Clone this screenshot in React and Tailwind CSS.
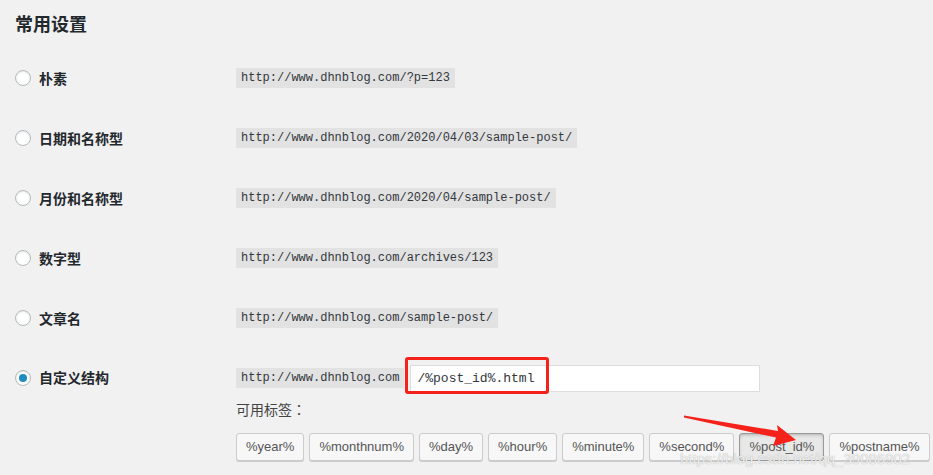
const rows = [
    { label: "朴素", url: "http://www.dhnblog.com/?p=123" },
    { label: "日期和名称型", url: "http://www.dhnblog.com/2020/04/03/sample-post/" },
    { label: "月份和名称型", url: "http://www.dhnblog.com/2020/04/sample-post/" },
    { label: "数字型", url: "http://www.dhnblog.com/archives/123" },
    { label: "文章名", url: "http://www.dhnblog.com/sample-post/" },
];

const tags = ["%year%", "%monthnum%", "%day%", "%hour%", "%minute%", "%second%", "%post_id%", "%postname%"];

const cjk = { fontFamily: '"Noto Sans", "Noto Sans CJK SC", sans-serif' };
const mono = { fontFamily: '"Liberation Mono", "DejaVu Sans Mono", monospace' };

function Radio({ checked }) {
    return (
        <span className="flex h-4 w-4 shrink-0 items-center justify-center rounded-full border border-[#b4b9be] bg-white shadow-[inset_0_1px_2px_rgba(0,0,0,0.1)]">
            {checked && <span className="h-2 w-2 rounded-full bg-[#1e8cbe]" />}
        </span>
    );
}

export default function App() {
    return (
        <div className="relative h-[475px] w-[933px] overflow-hidden bg-[#f1f1f1] pl-[15px] text-[#23282d]" style={cjk}>
            {/* 标题 */}
            <h2 className="h-12 pt-[11px] text-[18px] font-semibold leading-[26px] text-[#23282d]">常用设置</h2>

            {rows.map((r) => (
                <div key={r.label} className="flex h-[60px] items-center">
                    <div className="flex w-[221px] shrink-0 items-center gap-2">
                        <Radio />
                        <span className="text-[14px] font-semibold">{r.label}</span>
                    </div>
                    <code className="h-5 bg-[#e2e2e2] px-[5px] text-[12px] leading-5 text-[#32373c]" style={mono}>
                        {r.url}
                    </code>
                </div>
            ))}

            {/* 自定义结构 */}
            <div className="flex pt-4">
                <div className="flex h-[27px] w-[221px] shrink-0 items-center gap-2">
                    <Radio checked />
                    <span className="text-[14px] font-semibold">自定义结构</span>
                </div>
                <div>
                    <div className="flex items-center gap-[6px]">
                        <code className="h-5 bg-[#e2e2e2] px-[5px] text-[12px] leading-5 text-[#32373c]" style={mono}>
                            http://www.dhnblog.com
                        </code>
                        <div className="relative">
                            <input
                                readOnly
                                value="/%post_id%.html"
                                className="h-[27px] w-[350px] border border-[#dddddd] bg-white px-[6px] text-[13px] text-[#32373c] outline-none"
                                style={mono}
                            />
                            <div className="pointer-events-none absolute left-[-5px] top-[-7px] h-[37px] w-[144px] rounded-[3px] border-[3px] border-[#f5211b]" />
                        </div>
                    </div>
                    <p
                        className="mt-[7px] text-[14px] leading-5 text-[#444]"
                        style={{ fontFamily: '"Noto Sans CJK TC", "Noto Sans CJK SC", sans-serif' }}
                    >
                        可用标签：
                    </p>
                    <div className="mt-[14px] flex gap-[5px]" style={{ fontFamily: '"Liberation Sans", sans-serif' }}>
                        {tags.map((t) => (
                            <button
                                key={t}
                                className={`h-[28px] rounded-[3px] border px-[9px] text-[13px] leading-[26px] text-[#555] ${t === "%post_id%"
                                    ? "border-[#999] bg-[#e8e8e8] shadow-[inset_0_2px_5px_-3px_rgba(0,0,0,0.5)]"
                                    : "border-[#cccccc] bg-[#f7f7f7] shadow-[0_1px_0_#cccccc]"
                                    }`}
                            >
                                {t}
                            </button>
                        ))}
                    </div>
                </div>
            </div>

            {/* 红色箭头 */}
            <svg className="pointer-events-none absolute left-0 top-0" width="933" height="475">
                <polygon points="684,415.5 778,431 777,425 796,440 773,446 776,437.5 684,417.5" fill="#f5211b" />
            </svg>

            {/* 水印 */}
            <span
                className="pointer-events-none absolute left-[680px] top-[447px] text-[15px] leading-6 text-white/80 [text-shadow:0_0_1px_#999]"
                style={{ fontFamily: '"Liberation Sans", sans-serif' }}
            >
                https://blog.csdn.net/qq_39086902
            </span>
        </div>
    );
}
